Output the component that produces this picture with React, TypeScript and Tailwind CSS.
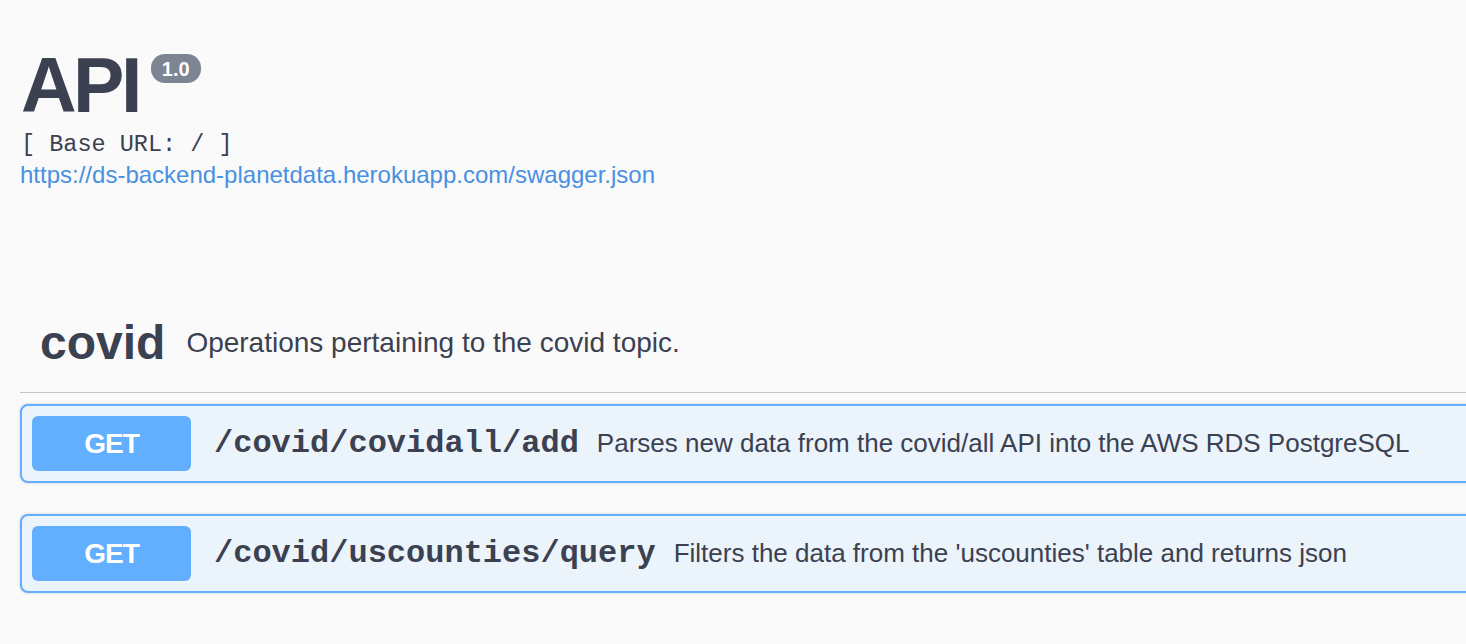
import React from 'react';

const ops = [
  { path: '/covid/covidall/add', summary: 'Parses new data from the covid/all API into the AWS RDS PostgreSQL' },
  { path: '/covid/uscounties/query', summary: "Filters the data from the 'uscounties' table and returns json" },
];

const App: React.FC = () => {
  return (
    <div className="w-[1466px] h-[644px] overflow-hidden bg-[#fafafa] text-[#3b4151] font-['Liberation_Sans',Arial,sans-serif]">
      <div className="w-[1500px] pl-5">
        <div className="pt-[39px]">
          <div className="flex items-start">
            <h1 className="text-[77px] font-bold leading-[92px] tracking-[-3.5px] ml-[1px]">API</h1>
            <span className="mt-[15px] ml-[12px] rounded-[14px] bg-[#7d8492] px-[11px] h-[29px] flex items-center text-[20px] font-bold text-white leading-none">
              1.0
            </span>
          </div>
          <div className="font-['Liberation_Mono','Courier_New',monospace] text-[23.5px] leading-[28px] ml-[1px]">
            [ Base URL: / ]
          </div>
          <a className="block text-[24px] leading-[32px] text-[#4990e2]" href="#">
            https://ds-backend-planetdata.herokuapp.com/swagger.json
          </a>
        </div>

        <div className="mt-[118px]">
          <div className="flex items-center pl-5 pt-[6px] pb-[21px] border-b border-[#c4c5c9]">
            <h2 className="text-[48px] font-bold leading-[56px]">covid</h2>
            <span className="ml-[21px] text-[28px]">Operations pertaining to the covid topic.</span>
          </div>

          <div className="flex flex-col gap-[31px] mt-[11px]">
            {ops.map((op) => (
              <div
                key={op.path}
                className="flex items-center h-[79px] rounded-[8px] border-2 border-[#61affe] bg-[#ebf3fb] px-[10px] shadow-[0_0_3px_rgba(0,0,0,0.19)]"
              >
                <span className="w-[159px] h-[55px] rounded-[6px] bg-[#61affe] flex items-center justify-center text-white font-bold text-[28px] tracking-[-1px]">
                  GET
                </span>
                <span className="ml-[23px] font-['Liberation_Mono','Courier_New',monospace] font-bold text-[32px]">
                  {op.path}
                </span>
                <span className="ml-[18px] text-[26px]">{op.summary}</span>
              </div>
            ))}
          </div>
        </div>
      </div>
    </div>
  );
};

export default App;
